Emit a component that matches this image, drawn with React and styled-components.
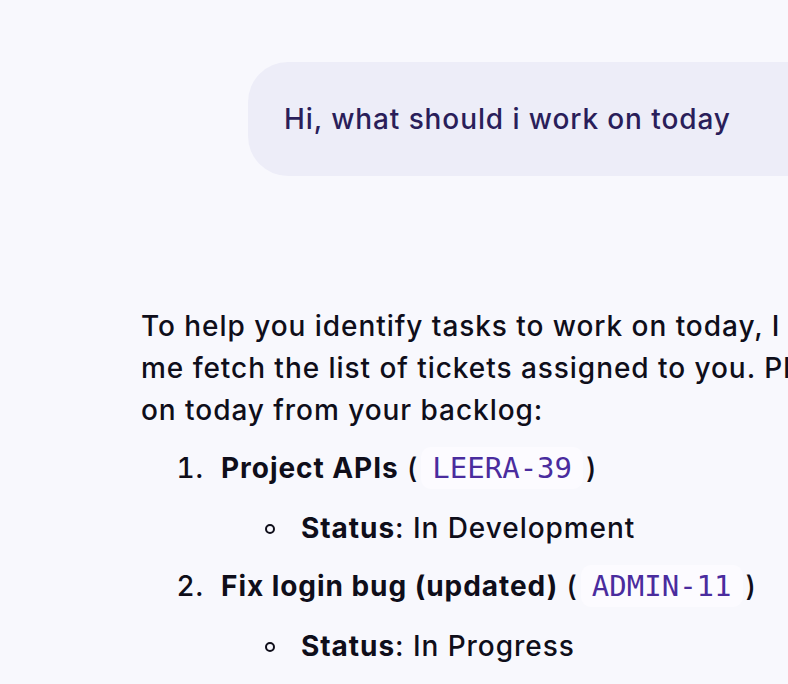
import React from 'react'
import styled, { createGlobalStyle } from 'styled-components'

const GlobalStyle = createGlobalStyle`
  html, body {
    margin: 0;
    padding: 0;
    overflow: hidden;
    background: #f8f8fd;
  }
  body {
    font-family: Inter, "Noto Sans", sans-serif;
    font-weight: 450;
    letter-spacing: 0.95px;
    color: #0f0e1a;
  }
`

const tickets = [
  { title: 'Project APIs', key: 'LEERA-39', status: 'In Development' },
  { title: 'Fix login bug (updated)', key: 'ADMIN-11', status: 'In Progress' },
]

function App() {
  return (
    <Page>
      <GlobalStyle />
      <Thread>
        <UserRow>
          <UserBubble>Hi, what should i work on today</UserBubble>
        </UserRow>
        <Reply>
          <Paragraph>
            To help you identify tasks to work on today, I will let<br />
            me fetch the list of tickets assigned to you. Please find the tasks you can work<br />
            on today from your backlog:
          </Paragraph>
          <Numbered>
            {tickets.map(t => (
              <Item key={t.key}>
                <strong>{t.title}</strong> (<Code>{t.key}</Code>)
                <Bullets>
                  <SubItem>
                    <strong>Status</strong>: {t.status}
                  </SubItem>
                </Bullets>
              </Item>
            ))}
          </Numbered>
        </Reply>
      </Thread>
    </Page>
  )
}

export default App

const Page = styled.div`
  width: 788px;
  height: 684px;
  overflow: hidden;
  background: #f8f8fd;
`

const Thread = styled.div`
  width: 1100px;
  padding: 62px 0 0 141px;
  display: flex;
  flex-direction: column;
`

const UserRow = styled.div`
  display: flex;
  padding-left: 107px;
`

const UserBubble = styled.div`
  width: 900px;
  background: #ededf8;
  color: #2a1e5a;
  font-size: 28px;
  line-height: 42px;
  padding: 36px;
  border-radius: 40px;
  letter-spacing: 0.9px;
`

const Reply = styled.div`
  margin-top: 129px;
  font-size: 28px;
  line-height: 42px;
  white-space: nowrap;
`

const Paragraph = styled.p`
  margin: 0;
`

const Numbered = styled.ol`
  margin: 0;
  padding-left: 80px;
  strong {
    font-weight: 650;
  }
`

const Item = styled.li`
  margin-top: 16px;
  &::marker {
    content: counter(list-item) ".  ";
  }
`

const Bullets = styled.ul`
  margin: 0;
  padding-left: 80px;
  list-style: none;
`

const SubItem = styled.li`
  margin-top: 18px;
  &::before {
    content: "";
    display: inline-block;
    box-sizing: border-box;
    width: 10px;
    height: 10px;
    border: 2px solid #0f0e1a;
    border-radius: 50%;
    margin-left: -36px;
    margin-right: 26px;
    vertical-align: 4px;
  }
`

const Code = styled.code`
  font-family: "DejaVu Sans Mono", "Liberation Mono", monospace;
  font-size: 29px;
  font-weight: 400;
  line-height: 1;
  letter-spacing: 0;
  color: #4a2c9e;
  background: #fcfbff;
  border-radius: 10px;
  padding: 4px 11px;
  margin: 0 3px;
`
